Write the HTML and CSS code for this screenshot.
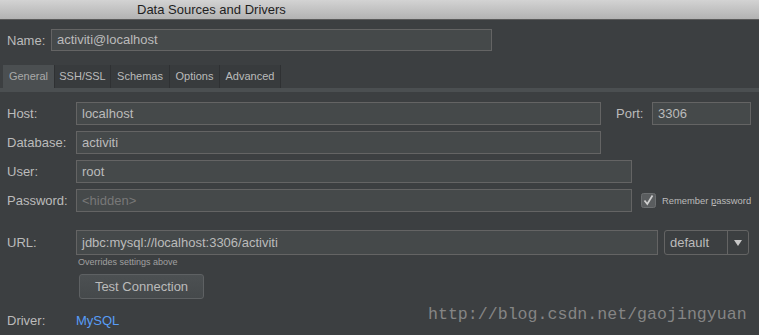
FILE: index.html
```html
<!DOCTYPE html>
<html lang="en">
<head>
  <meta charset="UTF-8" />
  <title>Data Sources and Drivers</title>
  <link rel="stylesheet" href="styles.css">
</head>
<body>
  <div class="titlebar">Data Sources and Drivers</div>

  <div class="name-row">
    <label>Name:</label>
    <div class="field name-field">activiti@localhost</div>
  </div>

  <div class="tabs">
    <div class="tab active tab-general">General</div>
    <div class="tab tab-ssh">SSH/SSL</div>
    <div class="tab tab-schemas">Schemas</div>
    <div class="tab tab-options">Options</div>
    <div class="tab tab-advanced">Advanced</div>
  </div>

  <div class="form">
    <label>Host:</label>
    <div class="line">
      <div class="field host-field">localhost</div>
      <label class="port-label">Port:</label>
      <div class="field port-field">3306</div>
    </div>

    <label>Database:</label>
    <div class="line">
      <div class="field host-field">activiti</div>
    </div>

    <label>User:</label>
    <div class="line">
      <div class="field user-field">root</div>
    </div>

    <label>Password:</label>
    <div class="line">
      <div class="field user-field placeholder">&lt;hidden&gt;</div>
      <div class="check">
        <svg width="15" height="15" viewBox="0 0 15 15">
          <rect x="0.5" y="0.5" width="14" height="14" rx="2" fill="#5a5d5f" stroke="#6c6f71"/>
          <path d="M3.5 7.5 L6.3 11 L11.5 2.5" fill="none" stroke="#d0d0d0" stroke-width="1.7"/>
        </svg>
        <span>Remember <u>p</u>assword</span>
      </div>
    </div>
  </div>

  <div class="form url-form">
    <label>URL:</label>
    <div class="line">
      <div class="field url-field">jdbc:mysql://localhost:3306/activiti</div>
      <div class="combo">
        <span class="combo-value">default</span>
        <span class="combo-arrow">
          <svg width="8" height="6" viewBox="0 0 8 6"><path d="M0 0 H8 L4 6 Z" fill="#c8c8c8"/></svg>
        </span>
      </div>
    </div>
    <div></div>
    <div class="hint">Overrides settings above</div>
    <div></div>
    <div><button class="test-btn">Test Connection</button></div>
    <label class="driver-label">Driver:</label>
    <div class="driver"><a href="#">MySQL</a></div>
  </div>

  <div class="watermark">http://blog.csdn.net/gaojingyuan</div>
</body>
</html>
```

FILE: styles.css
```css
body {
  margin: 0;
  width: 759px;
  height: 335px;
  overflow: hidden;
  background: #3c3f41;
  color: #bbbbbb;
  font-family: "Liberation Sans", Arial, sans-serif;
  font-size: 13px;
  position: relative;
}
.titlebar {
  height: 19px;
  line-height: 20px;
  background: linear-gradient(#d3d3d3, #b2b2b2);
  border-bottom: 1px solid #5a5a5a;
  color: #1e1e1e;
  font-size: 13px;
  padding-left: 137px;
}
.name-row {
  display: flex;
  align-items: center;
  padding: 9px 0 0 7px;
  height: 22px;
}
.name-row label {
  width: 44px;
}
.field {
  box-sizing: border-box;
  height: 23px;
  line-height: 21px;
  background: #45494a;
  border: 1px solid #646464;
  padding: 0 5px;
  color: #bbbbbb;
  white-space: nowrap;
}
.name-field {
  width: 441px;
  height: 22px;
  line-height: 20px;
}
.tabs {
  display: flex;
  margin-top: 14px;
  padding-left: 3px;
  height: 23px;
  border-bottom: 4px solid #4b4f51;
}
.tab {
  box-sizing: border-box;
  font-size: 11px;
  line-height: 23px;
  text-align: center;
  border-right: 1px solid #2f3133;
  background: #383b3d;
  color: #bbbbbb;
  white-space: nowrap;
}
.tab.active {
  background: #4b4f51;
  color: #a9a9a9;
}
.tab-general { width: 52px; }
.tab-ssh { width: 56px; }
.tab-schemas { width: 59px; }
.tab-options { width: 50px; }
.tab-advanced { width: 61px; }
.form {
  display: grid;
  grid-template-columns: 69px auto;
  row-gap: 6px;
  align-items: center;
  padding: 10px 0 0 7px;
}
.form label {
  color: #bbbbbb;
}
.line {
  display: flex;
  align-items: center;
}
.host-field {
  width: 525px;
}
.port-label {
  margin-left: 15px;
  width: 36px;
}
.port-field {
  width: 99px;
}
.user-field {
  width: 556px;
}
.placeholder {
  color: #787878;
}
.check {
  display: flex;
  align-items: center;
  margin-left: 9px;
  font-size: 9.4px;
  color: #bbbbbb;
  white-space: nowrap;
}
.check svg {
  margin-right: 6px;
}
.url-form {
  padding-top: 18px;
  row-gap: 0;
}
.url-field {
  width: 582px;
  height: 25px;
  line-height: 23px;
}
.combo {
  box-sizing: border-box;
  display: flex;
  margin-left: 6px;
  width: 85px;
  height: 25px;
  border: 1px solid #646464;
  border-radius: 3px;
}
.combo-value {
  flex: 1;
  line-height: 23px;
  padding-left: 5px;
  border-right: 1px solid #646464;
}
.combo-arrow {
  width: 20px;
  display: flex;
  align-items: center;
  justify-content: center;
}
.hint {
  font-size: 9px;
  color: #a0a0a0;
  padding: 2px 0 0 2px;
  height: 12px;
}
.test-btn {
  display: block;
  margin: 5px 0 0 3px;
  width: 125px;
  height: 25px;
  background: linear-gradient(#4c5052, #45494b);
  border: 1px solid #5e6163;
  border-radius: 3px;
  color: #bbbbbb;
  font-family: "Liberation Sans", Arial, sans-serif;
  font-size: 13px;
}
.driver-label,
.driver {
  margin-top: 14px;
}
.driver a {
  color: #589df6;
  text-decoration: none;
}
.watermark {
  position: absolute;
  left: 428px;
  top: 305px;
  font-family: "Liberation Mono", "Courier New", monospace;
  font-size: 16.6px;
  color: #858585;
  white-space: nowrap;
}
```
